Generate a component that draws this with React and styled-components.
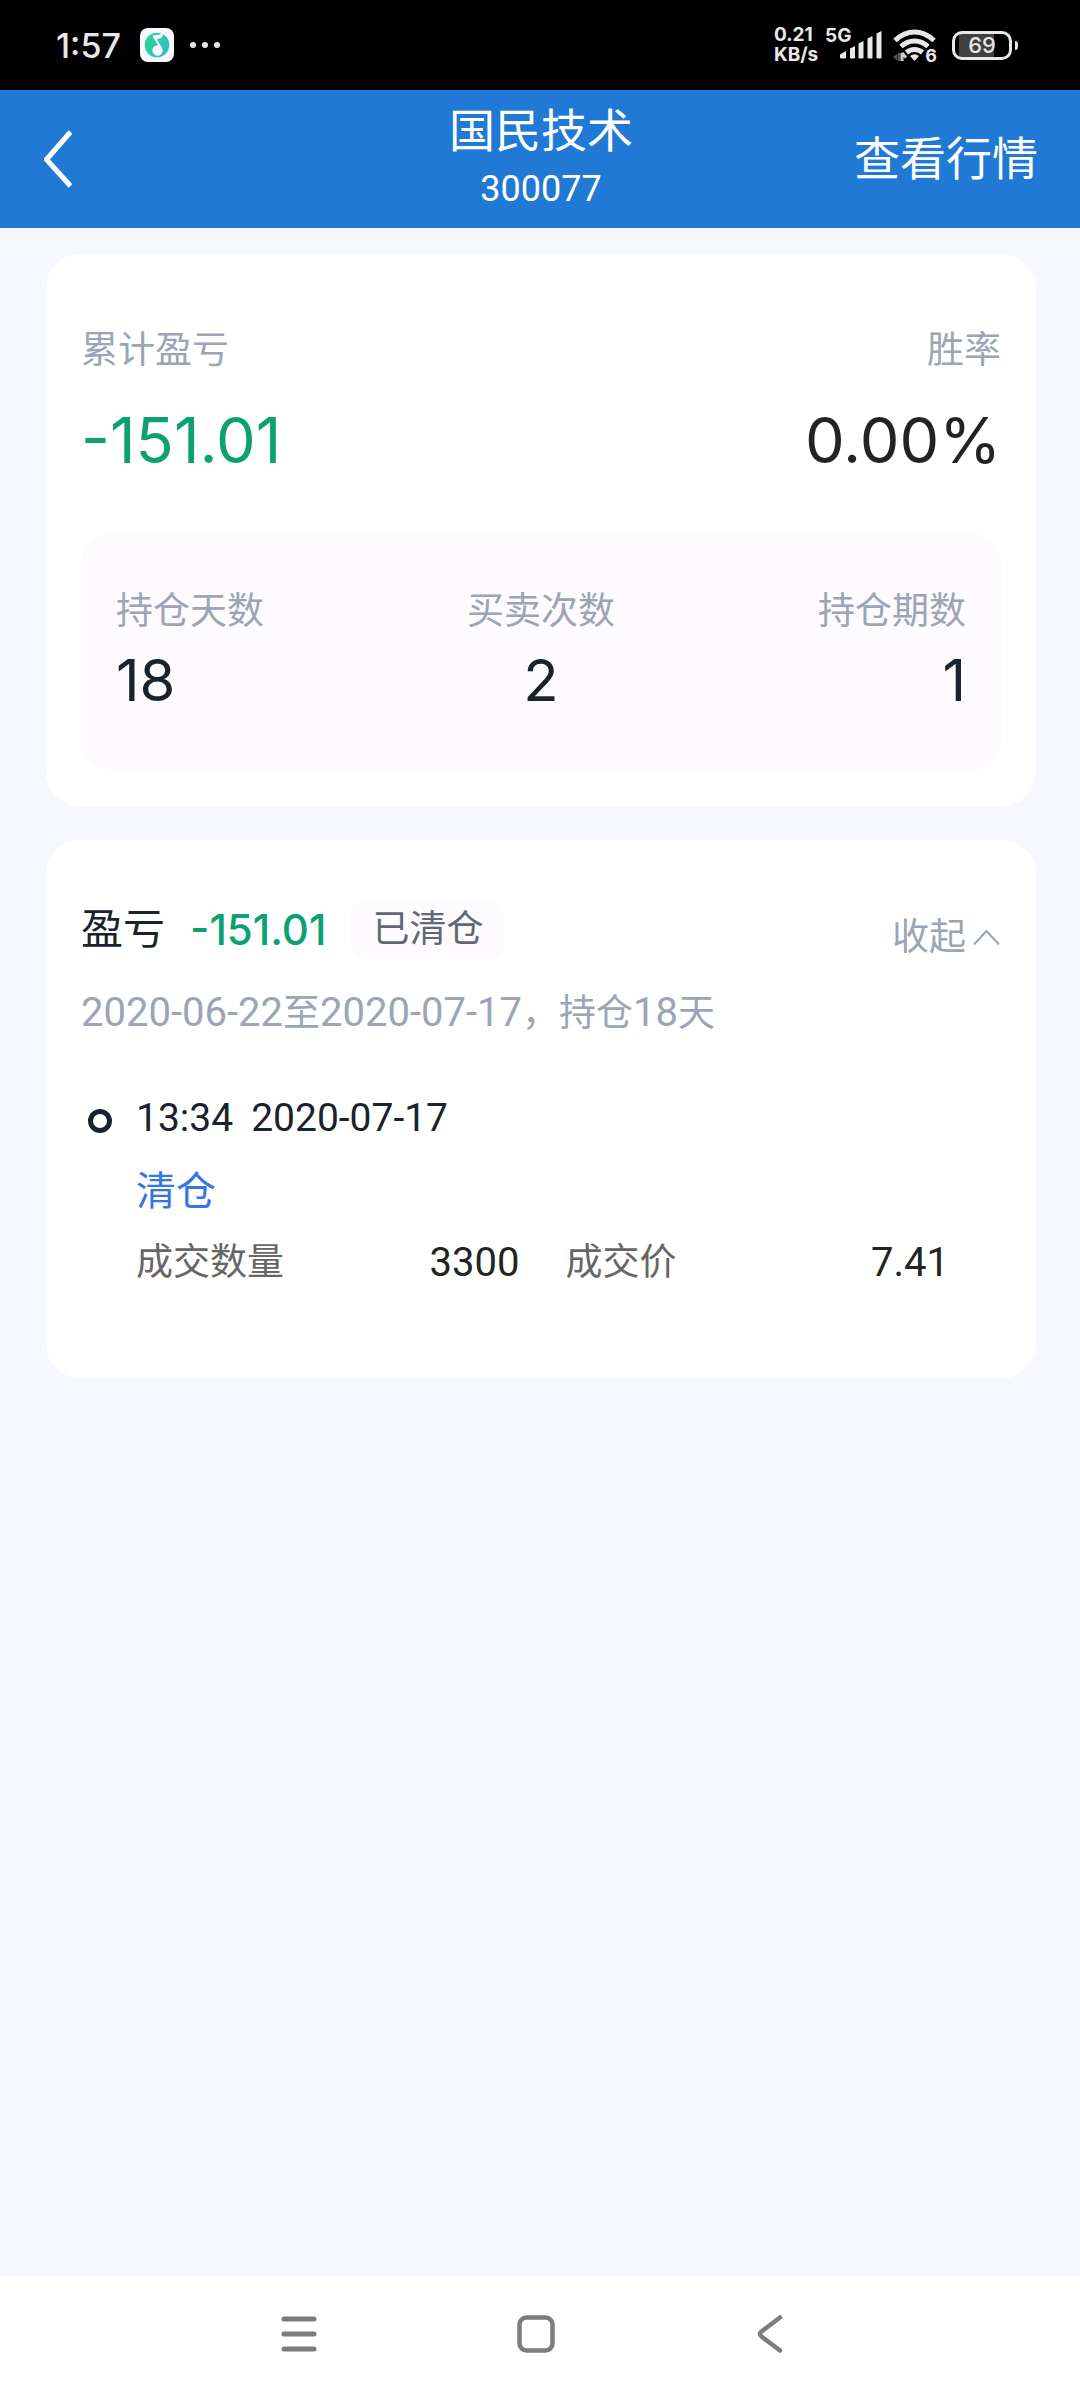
import React, { useState } from 'react';
import styled, { createGlobalStyle } from 'styled-components';

const GlobalStyle = createGlobalStyle`
  * {
    box-sizing: border-box;
  }
  body {
    margin: 0;
    background-color: #f6f7ff;
    font-family: Roboto, 'Noto Sans CJK SC', sans-serif;
    color: #19222d;
  }
  button {
    padding: 0;
    border: 0;
    background: none;
    font-family: inherit;
    color: inherit;
    cursor: pointer;
  }
  svg {
    display: block;
    flex: none;
  }
`;

const Page = styled.div`
  display: flex;
  flex-direction: column;
  min-height: 100vh;
`;

const StatusBar = styled.div`
  display: flex;
  align-items: center;
  justify-content: space-between;
  height: 90px;
  padding: 0 62px 0 56px;
  background-color: #000000;
  color: #e8e8e8;
  font-family: Inter, sans-serif;
`;

const StatusGroup = styled.div`
  display: flex;
  align-items: center;
`;

const Clock = styled.span`
  margin-right: 19px;
  font-size: 34px;
  font-weight: 500;
`;

const MoreDots = styled.span`
  display: flex;
  gap: 6px;
  margin-left: 16px;

  i {
    width: 6px;
    height: 6px;
    border-radius: 50%;
    background-color: #e8e8e8;
  }
`;

const Speed = styled.span`
  display: flex;
  flex-direction: column;
  width: 66px;
  font-size: 19px;
  font-weight: 700;
  line-height: 20px;
`;

const Signal = styled.span`
  position: relative;
  margin-right: 11px;
`;

const Network = styled.span`
  position: absolute;
  top: -4px;
  left: -15px;
  font-size: 19px;
  font-weight: 700;
  line-height: 18px;
`;

const Wifi = styled.span`
  position: relative;
  margin-right: 15px;
`;

const WifiVersion = styled.span`
  position: absolute;
  right: 0;
  bottom: -3px;
  font-size: 18px;
  font-weight: 700;
  line-height: 18px;
`;

const Battery = styled.span`
  display: flex;
  align-items: center;
  justify-content: center;
  width: 60px;
  height: 29px;
  border: 3px solid #e8e8e8;
  border-radius: 10px;
  background: linear-gradient(to right, #40403e 35px, transparent 35px) 4px 0
    no-repeat;
  font-size: 22px;
  font-weight: 500;
  line-height: 22px;
`;

const BatteryTip = styled.span`
  width: 3px;
  height: 9px;
  margin-left: 3px;
  border-radius: 0 3px 3px 0;
  background-color: #e8e8e8;
`;

const Header = styled.header`
  display: grid;
  grid-template-columns: 1fr auto 1fr;
  align-items: center;
  height: 138px;
  padding: 0 42px 0 44px;
  background-color: #2179d6;
  color: #ffffff;
`;

const BackButton = styled.button`
  justify-self: start;
`;

const Heading = styled.div`
  text-align: center;
`;

const StockName = styled.h1`
  margin: 0;
  font-size: 46px;
  font-weight: 400;
  line-height: 60px;
`;

const StockCode = styled.div`
  font-size: 36px;
  line-height: 56px;
`;

const QuoteLink = styled.a`
  justify-self: end;
  padding-bottom: 8px;
  font-size: 46px;
  color: inherit;
  text-decoration: none;
`;

const Main = styled.main`
  display: flex;
  flex: 1;
  flex-direction: column;
  gap: 34px;
  padding: 26px 44px 34px 46px;
`;

const Card = styled.section`
  padding: ${(props) => props.$padding};
  border-radius: 34px;
  background-color: #ffffff;
`;

const Row = styled.div`
  display: flex;
  justify-content: space-between;
`;

const Stat = styled.div`
  text-align: ${(props) => props.$align || 'left'};
`;

const Label = styled.div`
  font-size: 37px;
  line-height: 52px;
  color: #9ca4b5;
`;

const Total = styled.div`
  margin-top: 23px;
  font-family: Inter, sans-serif;
  font-size: 63px;
  line-height: 80px;
  color: ${(props) => props.$color};
`;

const Summary = styled.div`
  display: grid;
  grid-template-columns: repeat(3, 1fr);
  margin-top: 53px;
  padding: 53px 35px 55px;
  border-radius: 28px;
  background-color: #fefbff;
`;

const Count = styled.div`
  margin-top: 6px;
  font-family: Inter, sans-serif;
  font-size: 58px;
  line-height: 72px;
`;

const Profit = styled.div`
  display: flex;
  align-items: center;
  font-size: 42px;
  line-height: 58px;
`;

const ProfitValue = styled.span`
  margin-left: 25px;
  font-family: Inter, sans-serif;
  font-weight: 500;
  color: #0ca073;
`;

const Tag = styled.span`
  margin-left: 25px;
  padding: 0 21px;
  border-radius: 12px;
  background-color: #fefbff;
  font-size: 37px;
  color: #626773;
`;

const CollapseButton = styled.button`
  display: flex;
  align-items: center;
  gap: 7px;
  padding-top: 16px;
  font-size: 37px;
  line-height: 42px;
  color: #9ca4b5;
`;

const Period = styled.p`
  margin: 28px 0 0;
  font-size: 37px;
  line-height: 52px;
  color: #9ca4b5;
`;

const Num = styled.span`
  font-size: 40px;
`;

const Timeline = styled.ol`
  margin: 52px 0 0;
  padding: 0;
  list-style: none;
`;

const Deal = styled.li`
  display: grid;
  grid-template-columns: 24px 1fr;
  column-gap: 24px;
  padding: 0 52px 0 7px;
`;

const Dot = styled.span`
  width: 24px;
  height: 24px;
  margin-top: 17px;
  border: 5px solid #19222d;
  border-radius: 50%;
`;

const DealTime = styled.div`
  display: flex;
  gap: 18px;
  font-size: 39px;
  line-height: 52px;
`;

const DealType = styled.div`
  margin-top: 22px;
  font-size: 40px;
  line-height: 52px;
  color: #3577e2;
`;

const DealFields = styled.dl`
  display: grid;
  grid-template-columns: 1fr 1fr;
  column-gap: 46px;
  margin: 19px 0 0;
  line-height: 52px;

  div {
    display: flex;
    justify-content: space-between;
  }
  dt {
    font-size: 37px;
    color: #666666;
  }
  dd {
    margin: 0;
    font-size: 40px;
    color: #222422;
  }
`;

const NavBar = styled.nav`
  display: flex;
  align-items: center;
  justify-content: center;
  gap: 196px;
  height: 124px;
  padding: 0 8px 8px 0;
  background-color: #ffffff;
`;

const MusicIcon = () => (
  <svg width="34" height="34" viewBox="0 0 34 34">
    <defs>
      <linearGradient id="music" x1="0" y1="0" x2="1" y2="0.4">
        <stop offset="0" stopColor="#2bd58c" />
        <stop offset="1" stopColor="#30bfc4" />
      </linearGradient>
    </defs>
    <rect width="34" height="34" rx="8" fill="#f7f8ff" />
    <circle cx="17" cy="17" r="12.3" fill="url(#music)" />
    <path
      d="M12.5 7.5L18 7L22.5 5L23 7.5L21.5 9.5L17 11.5L21.8 19.5A5.2 5.2 0 1 1 17 17.3L18 17.3L13.5 10Z"
      fill="#f7f8ff"
    />
  </svg>
);

const SignalIcon = () => (
  <svg width="42" height="28" viewBox="0 0 42 28" fill="#e8e8e8">
    <path d="M0 27V23.5L6 20V27Q3 28 0 27Z" />
    <path d="M10 27V17.5L15 15V27Q12.5 28 10 27Z" />
    <path d="M18.5 27V12.5L23.5 10V27Q21 28 18.5 27Z" />
    <path d="M27.5 27V7.5L32.5 5V27Q30 28 27.5 27Z" />
    <path d="M36.5 27V2.5L41.5 0V27Q39 28 36.5 27Z" />
  </svg>
);

const WifiIcon = () => (
  <svg width="44" height="33" viewBox="0 0 44 33" fill="none">
    <g stroke="#e8e8e8" strokeWidth="5">
      <path d="M2 11.5Q11 3 21.5 3T41 11.5" />
      <path d="M8 17.5Q14 12 21.5 12T35 17.5" />
      <path d="M13.5 23.5Q17 20.5 21.5 20.5T29.5 23.5" />
    </g>
    <path d="M17 27Q21.5 23.5 26 27L21.5 32Z" fill="#e8e8e8" />
    <path d="M0 28L4.5 24.5V32Z" fill="#555555" />
    <path d="M6 24V32" stroke="#555555" strokeWidth="2" />
    <path d="M9 24V32M9 24L13 28.5" stroke="#d0d0d0" strokeWidth="3" />
  </svg>
);

const stats = [
  { label: '持仓天数', value: '18', align: 'left' },
  { label: '买卖次数', value: '2', align: 'center' },
  { label: '持仓期数', value: '1', align: 'right' },
];

const deals = [
  { time: '13:34', date: '2020-07-17', type: '清仓', amount: '3300', price: '7.41' },
];

const App = () => {
  const [open, setOpen] = useState(true);

  return (
    <>
      <GlobalStyle />
      <Page>
        <StatusBar>
          <StatusGroup>
            <Clock>1:57</Clock>
            <MusicIcon />
            <MoreDots>
              <i />
              <i />
              <i />
            </MoreDots>
          </StatusGroup>
          <StatusGroup>
            <Speed>
              <span>0.21</span>
              <span>KB/s</span>
            </Speed>
            <Signal>
              <Network>5G</Network>
              <SignalIcon />
            </Signal>
            <Wifi>
              <WifiIcon />
              <WifiVersion>6</WifiVersion>
            </Wifi>
            <Battery>69</Battery>
            <BatteryTip />
          </StatusGroup>
        </StatusBar>

        <Header>
          <BackButton aria-label="返回">
            <svg width="32" height="60" viewBox="0 0 32 60" fill="none">
              <path d="M26.5 3L2.5 30.5L26.5 57" stroke="#ffffff" strokeWidth="5" />
            </svg>
          </BackButton>
          <Heading>
            <StockName>国民技术</StockName>
            <StockCode>300077</StockCode>
          </Heading>
          <QuoteLink href="#quote">查看行情</QuoteLink>
        </Header>

        <Main>
          <Card $padding="71px 35px 35px">
            <Row>
              <Stat>
                <Label>累计盈亏</Label>
                <Total $color="#0ca073">-151.01</Total>
              </Stat>
              <Stat $align="right">
                <Label>胜率</Label>
                <Total $color="#222422">0.00%</Total>
              </Stat>
            </Row>
            <Summary>
              {stats.map((stat) => (
                <Stat key={stat.label} $align={stat.align}>
                  <Label>{stat.label}</Label>
                  <Count>{stat.value}</Count>
                </Stat>
              ))}
            </Summary>
          </Card>

          <Card $padding="61px 35px 89px">
            <Row>
              <Profit>
                盈亏
                <ProfitValue>-151.01</ProfitValue>
                <Tag>已清仓</Tag>
              </Profit>
              <CollapseButton aria-expanded={open} onClick={() => setOpen(!open)}>
                收起
                <svg width="28" height="18" viewBox="0 0 28 18" fill="none">
                  <path d="M1 15.5L13.5 2L26 15.5" stroke="#9ca4b5" strokeWidth="2" />
                </svg>
              </CollapseButton>
            </Row>
            <Period>
              <Num>2020-06-22</Num>至<Num>2020-07-17</Num>，持仓<Num>18</Num>天
            </Period>
            {open && (
              <Timeline>
                {deals.map((deal) => (
                  <Deal key={deal.date + deal.time}>
                    <Dot />
                    <div>
                      <DealTime>
                        <span>{deal.time}</span>
                        <span>{deal.date}</span>
                      </DealTime>
                      <DealType>{deal.type}</DealType>
                      <DealFields>
                        <div>
                          <dt>成交数量</dt>
                          <dd>{deal.amount}</dd>
                        </div>
                        <div>
                          <dt>成交价</dt>
                          <dd>{deal.price}</dd>
                        </div>
                      </DealFields>
                    </div>
                  </Deal>
                ))}
              </Timeline>
            )}
          </Card>
        </Main>

        <NavBar>
          <button aria-label="菜单">
            <svg width="40" height="40" viewBox="0 0 40 40" fill="none">
              <path
                d="M4 5H34M4 20H34M4 35H34"
                stroke="#7d7d7d"
                strokeWidth="5"
                strokeLinecap="round"
              />
            </svg>
          </button>
          <button aria-label="主页">
            <svg width="40" height="40" viewBox="0 0 40 40" fill="none">
              <rect x="3.5" y="3.5" width="33" height="33" rx="7" stroke="#7d7d7d" strokeWidth="4.5" />
            </svg>
          </button>
          <button aria-label="后退">
            <svg width="40" height="40" viewBox="0 0 40 40" fill="none">
              <path
                d="M28 3.5L9.5 17.5Q6.5 20 9.5 22.5L28 36.5"
                stroke="#7d7d7d"
                strokeWidth="4.5"
                strokeLinecap="round"
              />
            </svg>
          </button>
        </NavBar>
      </Page>
    </>
  );
};

export default App;
